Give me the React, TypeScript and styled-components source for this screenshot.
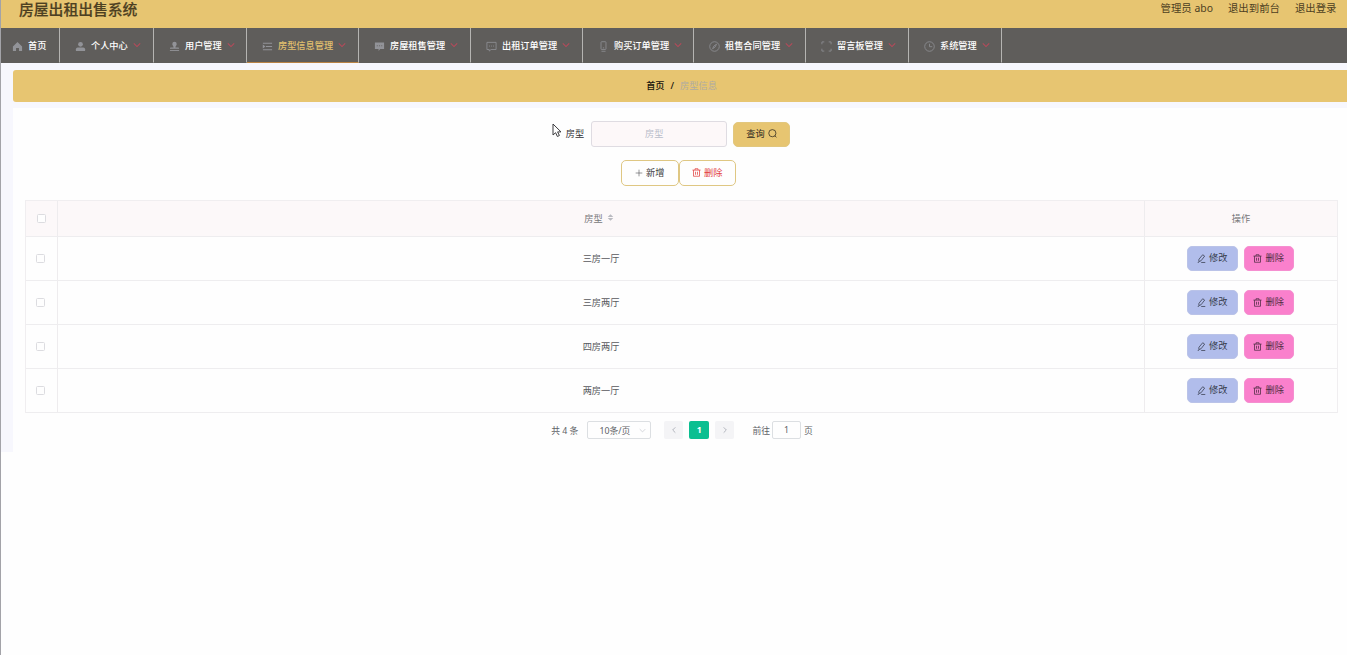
import React from "react";
import styled, { createGlobalStyle } from "styled-components";

const GlobalStyle = createGlobalStyle`
  * { box-sizing: border-box; }
  body {
    margin: 0;
    background: #fefefe;
    font-family: "Noto Sans", "Noto Sans CJK SC", sans-serif;
    font-size: 9.2px;
    color: #606266;
    overflow: hidden;
  }
  svg { flex: none; }
`;

const Page = styled.div`
  position: relative;
  width: 100%;
  height: 100vh;
  border-left: 1px solid #a3a3a8;
  overflow: hidden;
`;

const Header = styled.header`
  display: flex;
  justify-content: space-between;
  height: 28px;
  padding: 0 10px 0 18px;
  background: #e7c571;
  color: #4d4022;
`;

const Title = styled.h1`
  margin: 0;
  font-size: 14.8px;
  line-height: 18px;
  font-weight: 500;
  -webkit-text-stroke: 0.2px #4d4022;
`;

const UserLinks = styled.div`
  display: flex;
  gap: 15px;
  padding-right: 0.5px;
  font-size: 10.4px;
  line-height: 17px;
`;

const Nav = styled.nav`
  display: flex;
  height: 35px;
  background: #5f5d5b;
`;

const NavItem = styled.a<{ $width: number; $active?: boolean; $home?: boolean }>`
  display: flex;
  align-items: center;
  flex: none;
  width: ${(p) => p.$width}px;
  padding: 1px 0 0 ${(p) => (p.$home ? 11 : 15)}px;
  border-right: 1px solid #b5b4b2;
  border-bottom: 1px solid ${(p) => (p.$active ? "#b98345" : "#5f5d5b")};
  color: ${(p) => (p.$active ? "#e2c06e" : "#ffffff")};
  font-weight: 500;
  white-space: nowrap;

  > svg:first-child { margin-right: 5px; margin-top: 1px; }
  > svg:last-child { margin-left: 5px; margin-top: -2px; }
  > span { line-height: 14px; }
`;

const Main = styled.main`
  height: 389px;
  padding: 7px 0 0 12px;
  background: #f7f7fd;
`;

const Breadcrumb = styled.div`
  display: flex;
  align-items: center;
  justify-content: center;
  gap: 6px;
  height: 32px;
  padding: 0 0 2px 3px;
  border-radius: 3px 0 0 3px;
  background: #e7c571;
  color: #16130c;
  font-weight: 500;
`;

const CrumbCurrent = styled.span`
  color: #aeaba3;
  font-weight: 400;
`;

const Content = styled.section`
  height: 344px;
  margin-top: 6px;
  padding: 13px 10px 0 12px;
  background: #fefefe;
`;

const SearchRow = styled.div`
  display: flex;
  align-items: center;
  justify-content: center;
  height: 26px;
  padding-right: 6px;
  color: #303133;
`;

const SearchLabel = styled.span`
  padding-bottom: 2px;
`;

const SearchInput = styled.input`
  width: 136px;
  height: 26px;
  margin: 0 6px 0 7px;
  padding: 0 10px 2px 0;
  border: 1px solid #dfdce2;
  border-radius: 3px;
  outline: none;
  background: #fdf8f9;
  text-align: center;
  font: inherit;
  &::placeholder { color: #b9bdca; }
`;

const Button = styled.button<{ $tone: "gold" | "plain" | "danger" | "edit" | "remove" }>`
  display: flex;
  align-items: center;
  justify-content: center;
  gap: 3.5px;
  height: ${(p) => (p.$tone === "plain" || p.$tone === "danger" ? 26 : 25)}px;
  width: ${(p) =>
    ({ gold: 57, plain: 58, danger: 57, edit: 51, remove: 50 })[p.$tone]}px;
  padding: 0 0 1px;
  border: 1px solid
    ${(p) =>
      ({ gold: "#e2c77e", plain: "#dfc783", danger: "#dfc783", edit: "#bac3e8", remove: "#f58fd0" })[p.$tone]};
  border-radius: 5px;
  background: ${(p) =>
    ({ gold: "#e7c571", plain: "#fefefe", danger: "#fefefe", edit: "#b1bdeb", remove: "#fa80cc" })[p.$tone]};
  color: ${(p) =>
    ({ gold: "#2c281f", plain: "#3d3d40", danger: "#e2403f", edit: "#363b4b", remove: "#4b2b40" })[p.$tone]};
  font: inherit;
  line-height: 14px;
`;

const ActionRow = styled.div`
  display: flex;
  justify-content: center;
  margin-top: 13px;
  padding-right: 6px;
`;

const Table = styled.div`
  width: 1313px;
  margin-top: 14px;
  border: 1px solid #f0eef0;
  border-bottom: 0;
`;

const Row = styled.div<{ $head?: boolean }>`
  display: grid;
  grid-template-columns: 32px 1087px 1fr;
  height: ${(p) => (p.$head ? 36 : 44)}px;
  border-bottom: 1px solid #eeedef;
  background: ${(p) => (p.$head ? "#fcf8f9" : "#fefefe")};
  color: ${(p) => (p.$head ? "#77777a" : "#58595d")};
`;

const Cell = styled.div<{ $check?: boolean; $text?: boolean; $sortable?: boolean; $actions?: boolean }>`
  display: flex;
  align-items: center;
  justify-content: center;
  gap: ${(p) => (p.$text ? 4 : 6)}px;
  padding-right: ${(p) => (p.$sortable ? 4 : p.$check || p.$actions ? 2 : 0)}px;
  padding-bottom: ${(p) => (p.$text ? 2 : 0)}px;
  border-right: 1px solid #eeecee;
  &:last-child { border-right: 0; }
`;

const Checkbox = styled.span`
  width: 9px;
  height: 9px;
  border: 1px solid #dcdce0;
  border-radius: 1.5px;
  background: #fefefe;
`;

const Pagination = styled.div`
  display: flex;
  align-items: center;
  justify-content: center;
  height: 18px;
  margin-top: 8px;
  padding-left: 2px;
  font-size: 8.8px;
  color: #606266;
`;

const SizeSelect = styled.div`
  display: flex;
  align-items: center;
  justify-content: space-between;
  width: 64px;
  height: 18px;
  margin: 0 13px 0 9px;
  padding: 0 4px 0 11px;
  border: 1px solid #dcdfe2;
  border-radius: 2px;
`;

const PageButton = styled.span<{ $active?: boolean }>`
  display: flex;
  align-items: center;
  justify-content: center;
  width: ${(p) => (p.$active ? 20 : 19)}px;
  height: 18px;
  margin-right: 6px;
  border-radius: 2px;
  background: ${(p) => (p.$active ? "#0bbf91" : "#f4f4f6")};
  color: ${(p) => (p.$active ? "#ffffff" : "#b3b6be")};
  font-weight: 700;
`;

const JumpLabel = styled.span`
  margin-left: 12px;
`;

const JumpBox = styled.span`
  width: 29px;
  height: 18px;
  margin: 0 3px 0 2px;
  border: 1px solid #dcdfe2;
  border-radius: 2px;
  line-height: 16px;
  text-align: center;
`;

const Cursor = styled.svg`
  position: absolute;
  left: 551px;
  top: 123px;
`;

type IconName =
  | "home" | "user" | "stamp" | "list" | "chat" | "message" | "phone"
  | "compass" | "frame" | "clock" | "down" | "search" | "plus" | "trash" | "edit" | "left" | "right" | "sort";

const shapes: Record<IconName, React.ReactNode> = {
  home: <path d="M6 1 11 6v5H7.6V7.6H4.4V11H1V6Z" fill="currentColor" stroke="none" />,
  user: (
    <g fill="currentColor" stroke="none">
      <circle cx="6" cy="3.6" r="2.6" />
      <path d="M1 10.8V9q0-1.8 2-1.8h6q2 0 2 1.8v1.8Z" />
    </g>
  ),
  stamp: (
    <g fill="currentColor" stroke="none">
      <path d="M3.6 3.3a2.4 2.4 0 0 1 4.8 0C8.4 5 7 5.2 7 7.2h3q1 0 1 1.3H1q0-1.3 1-1.3h3C5 5.2 3.6 5 3.6 3.3Z" />
      <path d="M1 9.8h10v1H1z" />
    </g>
  ),
  list: <path d="M1 2.5h10M4.3 6H11M1 9.5h10M1.4 5v2L2.8 6Z" strokeWidth="1.1" />,
  chat: (
    <g stroke="none">
      <path d="M1 1.5h10v7.3H6.8L5 10.8V8.8H1Z" fill="currentColor" />
      <path d="M3 5.2h1.2M5.4 5.2h1.2M7.8 5.2H9" stroke="#5f5d5b" />
    </g>
  ),
  message: <path d="M1 1.5h10v7.8H5.5L3.5 11V9.3H1ZM3.3 5.5h1M5.5 5.5h1M7.7 5.5h1" />,
  phone: <path d="M4 .8h4q.7 0 .7.7v7q0 .7-.7.7H4q-.7 0-.7-.7v-7Q3.3.8 4 .8ZM3.8 11.2h4.4M5.3 7.5h1.4" />,
  compass: (
    <g>
      <circle cx="6" cy="6" r="5.2" />
      <path d="m8.2 3.5-1.5 3-2.8 2 1.4-3Z" />
    </g>
  ),
  frame: <path d="M1 3.6V1h2.6M8.4 1H11v2.6M11 8.4V11H8.4M3.6 11H1V8.4" />,
  clock: (
    <g>
      <circle cx="6" cy="6" r="5.2" />
      <path d="M6 3v3.2h3" />
    </g>
  ),
  down: <path d="m1.2 3.6 4.8 4.8 4.8-4.8" />,
  left: <path d="M8 2 4 6l4 4" />,
  right: <path d="m4 2 4 4-4 4" />,
  search: (
    <g>
      <circle cx="5.8" cy="5.6" r="4.8" />
      <path d="m9.2 9 2 2.2" />
    </g>
  ),
  plus: <path d="M6 1v10M1 6h10" />,
  trash: <path d="M.6 2.8h10.8M4 2.8V1h4v1.8M2 2.8V11h8V2.8M4.7 5v4M7.3 5v4" />,
  edit: <path d="M7.6 1 10.2 2.8 5.4 9 2.4 10.2l.2-3.2ZM1 11.3h1.4M5.6 11.3H11" />,
  sort: (
    <g fill="currentColor" stroke="none">
      <path d="M6 .6 10.8 5.2H1.2ZM6 11.4 1.2 6.8h9.6Z" />
    </g>
  ),
};

function Icon({ name, size = 9, color = "currentColor", weight = 1 }: {
  name: IconName; size?: number; color?: string; weight?: number;
}) {
  return (
    <svg width={size} height={size} viewBox="0 0 12 12" color={color} fill="none"
      stroke="currentColor" strokeWidth={weight}>
      {shapes[name]}
    </svg>
  );
}

const menu: { label: string; icon: IconName; width: number; active?: boolean }[] = [
  { label: "个人中心", icon: "user", width: 94 },
  { label: "用户管理", icon: "stamp", width: 93 },
  { label: "房型信息管理", icon: "list", width: 112, active: true },
  { label: "房屋租售管理", icon: "chat", width: 112 },
  { label: "出租订单管理", icon: "message", width: 112 },
  { label: "购买订单管理", icon: "phone", width: 111 },
  { label: "租售合同管理", icon: "compass", width: 112 },
  { label: "留言板管理", icon: "frame", width: 103 },
  { label: "系统管理", icon: "clock", width: 93 },
];

const roomTypes = ["三房一厅", "三房两厅", "四房两厅", "两房一厅"];

export default function App() {
  return (
    <Page>
      <GlobalStyle />
      <Header>
        <Title>房屋出租出售系统</Title>
        <UserLinks>
          <span>管理员 abo</span>
          <span>退出到前台</span>
          <span>退出登录</span>
        </UserLinks>
      </Header>
      <Nav>
        <NavItem $width={59} $home>
          <Icon name="home" size={11} color="#929398" />
          <span>首页</span>
        </NavItem>
        {menu.map((m) => (
          <NavItem key={m.label} $width={m.width} $active={m.active}>
            <Icon name={m.icon} size={11} color="#929398" weight={0.85} />
            <span>{m.label}</span>
            <Icon name="down" size={8} color="#b64a5a" weight={1.6} />
          </NavItem>
        ))}
      </Nav>
      <Main>
        <Breadcrumb>
          <span>首页</span>
          <span>/</span>
          <CrumbCurrent>房型信息</CrumbCurrent>
        </Breadcrumb>
        <Content>
          <SearchRow>
            <SearchLabel>房型</SearchLabel>
            <SearchInput placeholder="房型" />
            <Button $tone="gold">查询<Icon name="search" /></Button>
          </SearchRow>
          <ActionRow>
            <Button $tone="plain"><Icon name="plus" size={8} weight={0.8} />新增</Button>
            <Button $tone="danger"><Icon name="trash" />删除</Button>
          </ActionRow>
          <Table>
            <Row $head>
              <Cell><Checkbox /></Cell>
              <Cell $text $sortable>房型<Icon name="sort" size={7} color="#b9bac0" /></Cell>
              <Cell $text>操作</Cell>
            </Row>
            {roomTypes.map((name) => (
              <Row key={name}>
                <Cell $check><Checkbox /></Cell>
                <Cell $text>{name}</Cell>
                <Cell $actions>
                  <Button $tone="edit"><Icon name="edit" />修改</Button>
                  <Button $tone="remove"><Icon name="trash" />删除</Button>
                </Cell>
              </Row>
            ))}
          </Table>
          <Pagination>
            <span>共 4 条</span>
            <SizeSelect>10条/页<Icon name="down" size={7} color="#b9bcc4" /></SizeSelect>
            <PageButton><Icon name="left" size={8} weight={1.5} /></PageButton>
            <PageButton $active>1</PageButton>
            <PageButton><Icon name="right" size={8} weight={1.5} /></PageButton>
            <JumpLabel>前往</JumpLabel>
            <JumpBox>1</JumpBox>
            <span>页</span>
          </Pagination>
        </Content>
      </Main>
      <Cursor width="11" height="15" viewBox="0 0 11 15" fill="#fefefe" stroke="#3b3b3e" strokeWidth="1">
        <path d="M1 1v11l2.6-2.3L5.4 13.5l2-1-1.8-3.6H9Z" />
      </Cursor>
    </Page>
  );
}
